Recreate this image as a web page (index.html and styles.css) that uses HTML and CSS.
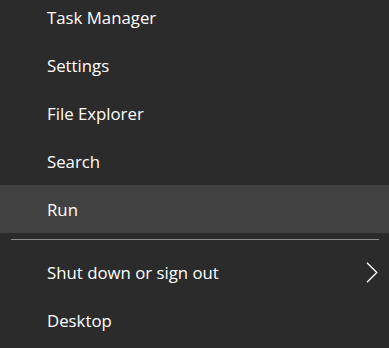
FILE: index.html
```html
<!DOCTYPE html>
<html lang="en">
<head>
    <meta charset="UTF-8">
    <title>Quick Link Menu</title>
    <link rel="stylesheet" href="styles.css">
</head>
<body>
    <div class="menu">
        <div class="menu-item">Task Manager</div>
        <div class="menu-item">Settings</div>
        <div class="menu-item">File Explorer</div>
        <div class="menu-item">Search</div>
        <div class="menu-item active">Run</div>

        <div class="separator"></div>

        <div class="menu-item has-sub">
            Shut down or sign out
            <svg class="chevron" width="12" height="21" viewBox="0 0 12 21" fill="none" xmlns="http://www.w3.org/2000/svg">
                <path d="M1 0.8L10.8 10.5L1 20.2" stroke="#ffffff" stroke-width="1.3"/>
            </svg>
        </div>
        <div class="menu-item">Desktop</div>
    </div>
</body>
</html>
```

FILE: styles.css
```css
body, html {
    margin: 0;
    padding: 0;
    height: 100%;
    background-color: #2b2b2b;
    overflow: hidden;
}
.menu {
    margin-top: -7px;
    font-family: 'Open Sans', 'Noto Sans', sans-serif;
    font-size: 16.8px;
    color: #ffffff;
}
.menu-item {
    height: 48px;
    padding-left: 47px;
    padding-right: 11px;
    display: flex;
    align-items: center;
    justify-content: space-between;
    box-sizing: border-box;
}
.menu-item.active {
    background-color: #414141;
}
.separator {
    height: 1px;
    margin: 6px 10px 8px 11px;
    background-color: #8c8c8c;
}
.chevron {
    display: block;
}
```
